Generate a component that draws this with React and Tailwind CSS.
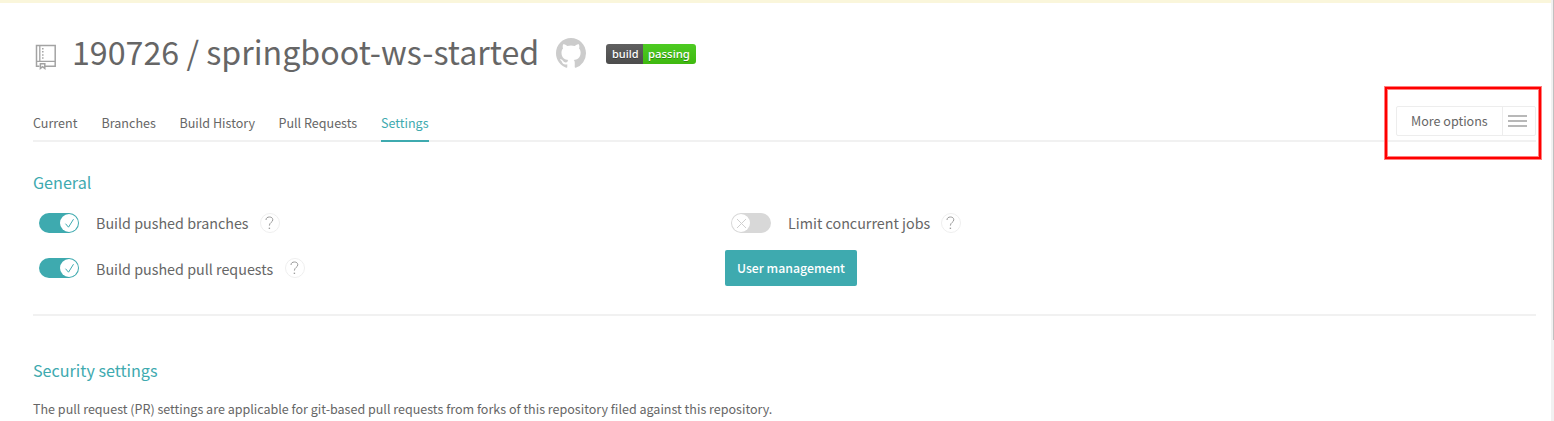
import React from "react";

const TABS = [
  { label: "Current", width: "w-[44.5px]" },
  { label: "Branches", width: "w-[54px]" },
  { label: "Build History", width: "w-[75px]" },
  { label: "Pull Requests", width: "w-[78.5px]" },
  { label: "Settings", width: "w-[48px]", active: true },
];

function RepoIcon() {
  return (
    <svg width="22" height="26" viewBox="0 0 22 26" fill="none" stroke="#a3a3a3" strokeWidth="1.5" className="shrink-0">
      <path d="M4.5 22.2H1.5V1.6H20.2V22.2H10" />
      <path d="M1.5 17.3H20.2M4.8 1.6V17" strokeWidth="1.3" />
      <path d="M7.8 4V16" strokeDasharray="1.5 1.6" />
      <path d="M5.4 19.8H9.8V24.4L7.6 22.7L5.4 24.4Z" />
    </svg>
  );
}

function GithubIcon() {
  return (
    <svg width="30" height="30" viewBox="0 0 16 15.7" preserveAspectRatio="none" fill="#cccccc" className="shrink-0">
      <path d="M8 0C3.58 0 0 3.58 0 8c0 3.54 2.29 6.53 5.47 7.59.4.07.55-.17.55-.38 0-.19-.01-.82-.01-1.49-2.01.37-2.53-.49-2.69-.94-.09-.23-.48-.94-.82-1.13-.28-.15-.68-.52-.01-.53.63-.01 1.08.58 1.23.82.72 1.21 1.87.87 2.33.66.07-.52.28-.87.51-1.07-1.78-.2-3.64-.89-3.64-3.95 0-.87.31-1.59.82-2.15-.08-.2-.36-1.02.08-2.12 0 0 .67-.21 2.2.82.64-.18 1.32-.27 2-.27s1.36.09 2 .27c1.53-1.04 2.2-.82 2.2-.82.44 1.1.16 1.92.08 2.12.51.56.82 1.27.82 2.15 0 3.07-1.87 3.75-3.65 3.95.29.25.54.73.54 1.48 0 1.07-.01 1.93-.01 2.2 0 .21.15.46.55.38A8.01 8.01 0 0 0 16 8c0-4.42-3.58-8-8-8z" />
    </svg>
  );
}

function BuildBadge() {
  return (
    <div className="flex h-5 w-[90px] shrink-0 overflow-hidden rounded-[3px] font-['Noto_Sans',sans-serif] text-[11.4px] font-medium leading-[20px] text-white [text-shadow:0_1px_0_rgba(1,1,1,0.3)]">
      <span className="w-[37px] bg-linear-to-b from-[#606060] to-[#4c4c4c] pl-[6px] text-[11px]">build</span>
      <span className="w-[53px] bg-linear-to-b from-[#4dcb22] to-[#3fb90f] pl-[5px]">passing</span>
    </div>
  );
}

function Toggle({ on }) {
  return on ? (
    <span className="flex h-5 w-10 shrink-0 items-center justify-end rounded-full bg-[#3eaaaf] p-px">
      <svg width="18" height="18" viewBox="0 0 18 18" fill="none">
        <circle cx="9" cy="9" r="9" fill="#fff" />
        <path d="M5.5 9.7L8.5 13.2L13.5 5.2" stroke="#3eaaaf" />
      </svg>
    </span>
  ) : (
    <span className="flex h-5 w-10 shrink-0 items-center rounded-full bg-[#d8d8d8] p-px">
      <svg width="18" height="18" viewBox="0 0 18 18" fill="none">
        <circle cx="9" cy="9" r="9" fill="#fff" />
        <path d="M5 5L14 14M14 5L5 14" stroke="#d0d0d0" />
      </svg>
    </span>
  );
}

function HelpIcon() {
  return (
    <svg width="20" height="20" viewBox="0 0 20 20" fill="none" className="shrink-0">
      <circle cx="10" cy="10" r="9.5" stroke="#efefef" />
      <path d="M6 7C6 5 7.4 4 9.4 4C11.4 4 12.8 5 12.8 6.8C12.8 9.3 9.4 9.4 9.4 12.6" stroke="#999999" />
      <path d="M8.7 15.3H10.1" stroke="#999999" strokeWidth="1.3" />
    </svg>
  );
}

function SettingRow({ on, label, labelClass, className }) {
  return (
    <div className={"flex h-5 items-start " + className}>
      <Toggle on={on} />
      <span className={"ml-[17px] text-[14.32px] " + labelClass}>{label}</span>
      <HelpIcon />
    </div>
  );
}

export default function App() {
  return (
    <div className="flex h-[421px] w-[1554px] overflow-hidden whitespace-nowrap bg-white font-['Noto_Sans_CJK_SC',sans-serif] text-[#666666]">
      <div className="w-[1551px] shrink-0">
        <div className="h-[3px] bg-[#faf6db]" />
        <div className="pl-[33px] pr-[15px]">
          <header className="flex h-[97px] items-start">
            <div className="ml-[1.5px] mt-[41px]">
              <RepoIcon />
            </div>
            <h1 className="ml-[15.5px] mt-[23px] w-[484px] text-[32.2px] leading-[50px]">190726 / springboot-ws-started</h1>
            <div className="mt-[35px]">
              <GithubIcon />
            </div>
            <div className="ml-[20px] mt-[41px]">
              <BuildBadge />
            </div>
          </header>

          <nav className="flex h-[42px] justify-between border-b-2 border-[#f1f1f1]">
            <div className="flex gap-6 text-[12.55px] leading-[46px]">
              {TABS.map((t) => (
                <a
                  key={t.label}
                  className={
                    "h-[42px] " + t.width + (t.active ? " border-b-2 border-[#3eaaaf] text-[#3eaaaf]" : "")
                  }
                >
                  {t.label}
                </a>
              ))}
            </div>
            <div className="relative mt-[6px] flex h-[30px] w-[140px] rounded-[2px] border border-[#ededed] bg-white">
              <span className="w-[106px] border-r border-[#ededed] pl-[14px] text-[12.55px] leading-[28px]">More options</span>
              <svg width="19" height="12" viewBox="0 0 19 12" className="ml-[5px] mt-[8px]" stroke="#b8b8b8" strokeWidth="2">
                <path d="M0 1H19M0 6H19M0 11H19" />
              </svg>
              <div className="absolute -left-[12px] -top-[20px] h-[72px] w-[156px] border-2 border-[#ff0000] ring-1 ring-[#ff8080] inset-ring-1 inset-ring-[#ff8080]" />
            </div>
          </nav>

          <section className="h-[174px] border-b-2 border-[#f1f1f1]">
            <h2 className="pt-[29px] text-[16.15px] leading-[22px] text-[#3eaaaf]">General</h2>
            <div className="mt-[20px] flex">
              <div className="w-[692px] pl-[6px]">
                <SettingRow on label="Build pushed branches" labelClass="w-[164px] leading-5" className="" />
                <SettingRow on label="Build pushed pull requests" labelClass="w-[189px] leading-[22px]" className="mt-[25px]" />
              </div>
              <div>
                <SettingRow label="Limit concurrent jobs" labelClass="w-[153px] leading-5" className="pl-[6px]" />
                <button className="mt-[17px] block h-9 w-[132px] rounded-[2px] bg-[#3eaaaf] text-[12.3px] font-medium leading-9 text-white">
                  User management
                </button>
              </div>
            </div>
          </section>

          <section>
            <h2 className="pt-[43px] text-[16.15px] leading-[22px] text-[#3eaaaf]">Security settings</h2>
            <p className="mt-[18px] text-[12.54px] leading-[20px]">
              The pull request (PR) settings are applicable for git-based pull requests from forks of this repository filed against this repository.
            </p>
          </section>
        </div>
      </div>
      <div className="w-[3px] bg-[#f1f1f1] pl-[2px]">
        <div className="h-[340px] bg-[#c1c1c1]" />
      </div>
    </div>
  );
}
